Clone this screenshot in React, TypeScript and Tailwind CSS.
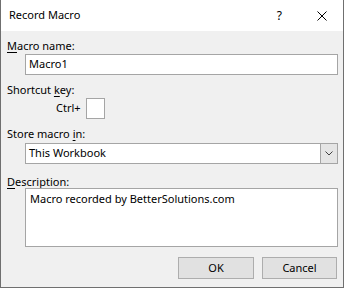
const font = "font-['Noto_Sans','Segoe_UI',sans-serif]";

function Label({ text, hot, className = "" }: { text: string; hot: number; className?: string }) {
  // hot = index of the accelerator letter that gets underlined
  return (
    <div className={`pl-[6px] text-[11px] leading-[16px] text-black ${className}`}>
      {text.slice(0, hot)}
      <span className="underline underline-offset-2">{text[hot]}</span>
      {text.slice(hot + 1)}
    </div>
  );
}

export default function App() {
  return (
    <div className={`flex h-[288px] w-[344px] flex-col border-x border-b border-[#6f6f6f] ${font}`}>
      <div className="flex h-[31px] shrink-0 items-center bg-white text-[11px] text-black">
        <span className="pl-[8px]">Record Macro</span>
        <span className="ml-auto mr-[35px] text-[12px]">?</span>
        <svg viewBox="0 0 10 10" className="mr-[16px] h-[10px] w-[10px]" aria-hidden>
          <path d="M0.5 0.5L9.5 9.5M9.5 0.5L0.5 9.5" stroke="#000" strokeWidth="1" />
        </svg>
      </div>

      <div className="flex flex-1 flex-col bg-[#f0f0f0]">
        <Label text="Macro name:" hot={0} className="mt-[7px]" />
        <div className="ml-[24px] mr-[5px] flex h-[21px] items-center border border-[#a5a5a5] bg-white pl-[3px] text-[11px] text-black">
          Macro1
        </div>

        <Label text="Shortcut key:" hot={9} className="mt-[7px]" />
        <div className="flex items-center">
          <span className="ml-[55px] text-[11px] text-black">Ctrl+</span>
          <div className="ml-[5px] h-[21px] w-[19px] border border-[#a5a5a5] bg-white" />
        </div>

        <Label text="Store macro in:" hot={12} className="mt-[7px]" />
        <div className="ml-[24px] mr-[5px] mt-[1px] flex h-[21px] border border-[#a5a5a5] bg-white text-[11px] text-black">
          <span className="flex flex-1 items-center pl-[3px]">This Workbook</span>
          <div className="flex w-[17px] items-center justify-center border-l border-[#a5a5a5] bg-[#e5e5e5]">
            <svg viewBox="0 0 8 5" className="h-[5px] w-[8px]" aria-hidden>
              <path d="M0.5 0.5L4 4L7.5 0.5" stroke="#404040" strokeWidth="1" fill="none" />
            </svg>
          </div>
        </div>

        <Label text="Description:" hot={0} className="mt-[10px]" />
        <div className="ml-[24px] mr-[5px] mt-[-2px] h-[59px] border border-[#a5a5a5] bg-white pl-[4px] pt-[2px] text-[11px] leading-[16px] text-black">
          Macro recorded by BetterSolutions.com
        </div>

        <div className="mr-[6px] mt-[10px] flex justify-end gap-[8px]">
          <button type="button" className="h-[22px] w-[76px] border border-[#adadad] bg-[#e1e1e1] text-[11px] text-black">
            OK
          </button>
          <button type="button" className="h-[22px] w-[75px] border border-[#adadad] bg-[#e1e1e1] text-[11px] text-black">
            Cancel
          </button>
        </div>
      </div>
    </div>
  );
}
